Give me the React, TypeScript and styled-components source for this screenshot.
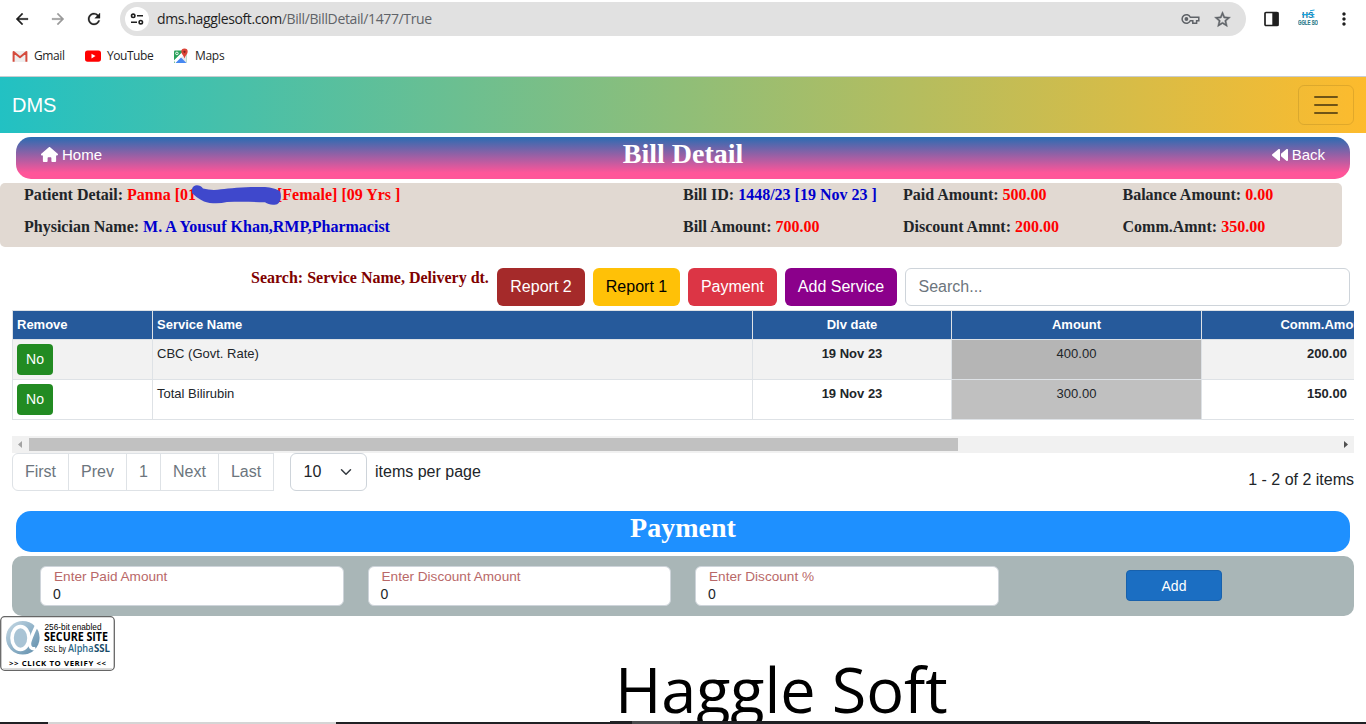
import React from "react";
import styled, { createGlobalStyle } from "styled-components";
import { MdArrowBack, MdArrowForward, MdRefresh, MdStarBorder, MdMoreVert } from "react-icons/md";
import { FaBackward, FaHouse } from "react-icons/fa6";

const sans = `"Liberation Sans", Arial, sans-serif`;
const serif = `"Liberation Serif", "Times New Roman", serif`;
const ui = `"Open Sans", "Segoe UI", sans-serif`;

const GlobalStyle = createGlobalStyle`
  *, *::before, *::after { box-sizing: border-box; }
  body { margin: 0; background: #fff; font-family: ${sans}; color: #212529; overflow: hidden; }
  button, input { font-family: inherit; margin: 0; }
`;

const Page = styled.div`
  width: 1366px;
  height: 724px;
  display: flex;
  flex-direction: column;
  position: relative;
  overflow: hidden;
  white-space: nowrap;
`;

/* Browser chrome */
const Toolbar = styled.div`
  height: 38px;
  display: flex;
  align-items: center;
  flex: none;
  padding-left: 13px;
  color: #1f1f1f;
`;
const NavIcon = styled.span<{ $dim?: boolean }>`
  width: 36px;
  height: 18px;
  display: flex;
  flex: none;
  color: ${(p) => (p.$dim ? "#9a9a9a" : "#1f1f1f")};
  path:not([fill="none"]) { stroke: currentColor; stroke-width: 0.4px; }
`;
const Omnibox = styled.div`
  width: 1126px;
  height: 34px;
  border-radius: 17px;
  background: #e1e1e1;
  display: flex;
  align-items: center;
  padding: 0 14px 0 5px;
  margin-left: -1px;
  flex: none;
  color: #5f6368;
`;
const SiteInfo = styled.span`
  width: 24px;
  height: 24px;
  border-radius: 50%;
  background: #fff;
  display: grid;
  place-items: center;
  margin-right: 8px;
`;
const Url = styled.span`
  flex: 1;
  font: 14px/20px ${ui};
  letter-spacing: -0.37px;
  & > b { font-weight: 400; color: #1f1f1f; }
`;
const BoxIcon = styled.span`
  display: flex;
  margin-left: 13px;
  path:not([fill="none"]) { stroke: currentColor; stroke-width: 0.6px; }
`;
const ToolIcon = styled.span<{ $gap: number }>`
  display: flex;
  margin-left: ${(p) => p.$gap}px;
`;
const Bookmarks = styled.div`
  height: 39px;
  flex: none;
  display: flex;
  align-items: center;
  padding: 0 12px 3px;
  border-bottom: 1px solid #c9cdd0;
  font: 12px/16px ${ui};
  color: #1f1f1f;
`;
const Bookmark = styled.span<{ $width: number; $spacing?: number }>`
  width: ${(p) => p.$width}px;
  display: flex;
  align-items: center;
  gap: 6px;
  letter-spacing: ${(p) => p.$spacing ?? 0}px;
`;

/* Site header */
const Navbar = styled.nav`
  height: 56px;
  flex: none;
  padding: 0 12px;
  display: flex;
  align-items: center;
  justify-content: space-between;
  background: linear-gradient(90deg, #22c1c3 0%, #fdbb2d 100%);
  color: #fff;
  font-size: 20px;
`;
const Toggler = styled.button`
  width: 56px;
  height: 40px;
  padding: 4px 12px;
  border: 1px solid rgba(0, 0, 0, 0.1);
  border-radius: 6px;
  background: transparent;
`;
const TitleBar = styled.header<{ $plain?: boolean }>`
  height: ${(p) => (p.$plain ? 41 : 42)}px;
  flex: none;
  margin: ${(p) => (p.$plain ? "20px 16px 4px" : "4px 16px")};
  padding: 0 25px;
  border-radius: 15px;
  background: ${(p) => (p.$plain ? "#1e90ff" : "linear-gradient(180deg, #2a6cb2 0%, #ff5599 85%)")};
  color: #fff;
  display: grid;
  grid-template-columns: 1fr auto 1fr;
`;
const Heading = styled.h1`
  margin: 0;
  grid-column: 2;
  font: bold 28px/34px ${serif};
`;
const TitleLink = styled.a<{ $end?: boolean }>`
  display: flex;
  height: 35px;
  align-items: center;
  gap: 4px;
  font-size: 15px;
  line-height: 17px;
  justify-self: ${(p) => (p.$end ? "end" : "start")};
`;

/* Bill summary */
const Summary = styled.section`
  position: relative;
  width: 1342px;
  height: 64px;
  flex: none;
  border-radius: 5px;
  background: #e1d9d2;
  padding: 0 0 0 24px;
  display: grid;
  grid-template-columns: 659px 220px 219.5px 1fr;
  grid-template-rows: 32px 32px;
  font: bold 16px/24px ${serif};
`;
const Value = styled.span<{ $blue?: boolean }>`
  color: ${(p) => (p.$blue ? "#0000cd" : "#ff0000")};
`;
const Redacted = styled.span`
  display: inline-block;
  width: 81px;
`;
const Scribble = styled.svg`
  position: absolute;
  left: 190px;
  top: 1px;
`;

/* Actions */
const Actions = styled.div`
  display: flex;
  gap: 8px;
  margin: 21px 16px 4px 251px;
  height: 38px;
  flex: none;
`;
const SearchLabel = styled.span`
  width: 238px;
  font: bold 16px/20px ${serif};
  color: #800000;
`;
const ActionButton = styled.button<{ $bg: string; $width: number; $dark?: boolean }>`
  width: ${(p) => p.$width}px;
  border: 0;
  padding: 0;
  border-radius: 6px;
  background: ${(p) => p.$bg};
  color: ${(p) => (p.$dark ? "#000" : "#fff")};
  font-size: 16px;
`;
const SearchInput = styled.input`
  flex: 1;
  min-width: 0;
  border: 1px solid #ced4da;
  border-radius: 6px;
  padding: 0 12.5px;
  font-size: 16px;
  &::placeholder { color: #6c757d; opacity: 1; }
`;

/* Table */
const TableFrame = styled.div`
  margin: 0 12px;
  height: 126px;
  flex: none;
  overflow: hidden;
`;
const Row = styled.div<{ $kind: "head" | "odd" | "even" }>`
  width: 1440px;
  height: ${(p) => (p.$kind === "head" ? 30 : 40)}px;
  display: grid;
  grid-template-columns: 140px 600px 199px 250px 251px;
  border-bottom: 1px solid #dee2e6;
  border-top: ${(p) => (p.$kind === "head" ? "1px solid #dee2e6" : "0")};
  background: ${(p) => ({ head: "#265a9b", odd: "#f2f2f2", even: "#fff" })[p.$kind]};
  color: ${(p) => (p.$kind === "head" ? "#fff" : "#212529")};
  font-weight: ${(p) => (p.$kind === "head" ? 700 : 400)};
  font-size: 13px;
`;
const Cell = styled.div<{ $center?: boolean; $bold?: boolean; $bg?: string }>`
  border-left: 1px solid #dee2e6;
  padding: 4px;
  line-height: 19.5px;
  text-align: ${(p) => (p.$center ? "center" : "left")};
  font-weight: ${(p) => (p.$bold ? 700 : "inherit")};
  background: ${(p) => p.$bg ?? "transparent"};
`;
const NoButton = styled.button`
  display: block;
  width: 36px;
  height: 31px;
  border: 0;
  padding: 0 0 2px;
  border-radius: 4px;
  background: #228b22;
  color: #fff;
  font-size: 14px;
`;
const ScrollTrack = styled.div`
  height: 17px;
  flex: none;
  margin: 0 12px;
  background: #f1f1f1;
  display: flex;
  align-items: center;
  justify-content: space-between;
`;
const Thumb = styled.span`
  width: 929px;
  height: 13px;
  background: #c1c1c1;
  margin-right: auto;
`;
const ScrollArrow = styled.svg`
  width: 17px;
  height: 17px;
  flex: none;
`;

/* Pagination */
const Pager = styled.div`
  height: 38px;
  flex: none;
  margin: 0 12px;
  display: flex;
  align-items: center;
  font-size: 16px;
`;
const PageLink = styled.a<{ $width: number }>`
  width: ${(p) => p.$width}px;
  height: 38px;
  border: 1px solid #dee2e6;
  margin-right: -1px;
  display: grid;
  place-items: center;
  color: #6c757d;
  &:first-child { border-radius: 6px 0 0 6px; }
`;
const SizeSelect = styled.div`
  width: 77px;
  height: 38px;
  margin: 0 8px 0 17px;
  padding: 0 14px 0 12.5px;
  border: 1px solid #ced4da;
  border-radius: 6px;
  display: flex;
  align-items: center;
  justify-content: space-between;
`;
const ItemCount = styled.span`
  margin-left: auto;
  padding-top: 16px;
`;

/* Payment form */
const PayForm = styled.section`
  height: 60px;
  flex: none;
  margin: 0 12px;
  padding: 0 28px;
  border-radius: 10px;
  background: #a9b6b7;
  display: flex;
  align-items: center;
  gap: 24px;
`;
const Field = styled.label`
  width: 303.5px;
  height: 40px;
  border: 1px solid #ced4da;
  border-radius: 6px;
  background: #fff;
  padding: 1px 12px;
  display: flex;
  flex-direction: column;
  font-size: 14px;
  line-height: 17px;
`;
const FieldLabel = styled.span`
  padding-left: 1px;
  font-size: 13.6px;
  line-height: 18px;
  color: #b96868;
`;
const AddButton = styled.button`
  width: 96px;
  height: 31px;
  margin: 0 0 1px 103.5px;
  padding: 0;
  border: 1px solid #1861ac;
  border-radius: 4px;
  background: #1b6ec2;
  color: #fff;
  font-size: 14px;
`;

/* Footer */
const Footer = styled.footer`
  height: 108px;
  flex: none;
  display: flex;
  align-items: flex-start;
  overflow: hidden;
`;
const Brand = styled.span`
  margin: 29px 0 0 500px;
  font: 63px/88px "Open Sans", sans-serif;
  letter-spacing: -0.1px;
  color: #000;
`;
const Taskbar = styled.div`
  position: absolute;
  left: 0;
  right: 0;
  bottom: 0;
  display: flex;
  align-items: flex-end;
`;
const TaskSegment = styled.span<{ $width: number; $color: string; $tall?: boolean }>`
  width: ${(p) => p.$width}px;
  height: ${(p) => (p.$tall ? 3 : 2)}px;
  background: ${(p) => p.$color};
`;

const rows = [
  { name: "CBC (Govt. Rate)", amount: "400.00", comm: "200.00" },
  { name: "Total Bilirubin", amount: "300.00", comm: "150.00" },
];

function TuneIcon() {
  return (
    <svg width="14" height="12" viewBox="0 0 14 12" fill="none" stroke="#1f1f1f" strokeWidth="1.6">
      <circle cx="3.2" cy="2.8" r="1.7" />
      <path d="M7 2.8h6M1 9.2h6" />
      <circle cx="10.8" cy="9.2" r="1.7" />
    </svg>
  );
}

function KeyIcon() {
  return (
    <svg width="19" height="12" viewBox="0 0 19 12" fill="none" stroke="#5f6368" strokeWidth="1.5">
      <path d="M9.3 4.2A4.3 4.3 0 1 0 9.3 7.8H11.8V10.2H15.6V7.8H17.8V4.2z" />
      <circle cx="5.4" cy="6" r="1.9" fill="#5f6368" stroke="none" />
    </svg>
  );
}

function GmailIcon() {
  return (
    <svg width="16" height="16" viewBox="0 0 16 16">
      <rect x="1" y="3" width="14" height="11" rx="1" fill="#eee" />
      <path d="M1.6 13.8V4l6.4 5.2L14.4 4v9.8" fill="none" stroke="#d54b3d" strokeWidth="2" strokeLinejoin="round" />
    </svg>
  );
}

function YouTubeIcon() {
  return (
    <svg width="16" height="16" viewBox="0 0 16 16">
      <rect x="0" y="2.5" width="16" height="11.2" rx="2.6" fill="#f00" />
      <path d="M6.5 5.8v4.6l4-2.3z" fill="#fff" />
    </svg>
  );
}

function MapsIcon() {
  return (
    <svg width="16" height="16" viewBox="0 0 16 16">
      <rect x="1" y="2.5" width="12.5" height="12.5" rx="1" fill="#2aa15b" />
      <path d="M1 12.5 11 2.5l2.5 1V15H3z" fill="#e8eaed" />
      <path d="M1 12.5 9.5 4l2.2 2L3 15H2z" fill="#fff" />
      <path d="M2.5 15 8 9.6l5.5 5.4z" fill="#4688f1" />
      <circle cx="3.9" cy="5.4" r="1.3" fill="none" stroke="#fff" strokeWidth=".9" />
      <path d="M11.5 10.5c-.4-2.7-3.2-4-3.2-6.7a3.2 3.2 0 0 1 6.4 0c0 2.7-2.8 4-3.2 6.7z" fill="#db4437" />
      <circle cx="11.5" cy="3.8" r="1.1" fill="#7b231e" />
    </svg>
  );
}

function PanelIcon() {
  return (
    <svg width="15" height="16" viewBox="0 0 15 16">
      <rect x="1" y="1.5" width="13" height="13" rx="1" fill="none" stroke="#1f1f1f" strokeWidth="1.7" />
      <path d="M8.3 1h6v14h-6z" fill="#1f1f1f" />
    </svg>
  );
}

function ProfileIcon() {
  return (
    <svg width="20" height="20" viewBox="0 0 20 20">
      <text x="4" y="8.5" fontFamily="Liberation Sans, sans-serif" fontWeight="700" fontSize="8.5" fill="#0d79ad" textLength="11.5" lengthAdjust="spacingAndGlyphs">HS</text>
      <path d="M12 1.8 16.5 1M4 5.5h12.5M14.5 8h2" stroke="#19a7e0" strokeWidth="1" />
      <text x="0" y="16" fontFamily="Liberation Sans, sans-serif" fontWeight="700" fontSize="6.5" fill="#2b7889" stroke="#2b7889" strokeWidth=".2" textLength="20" lengthAdjust="spacingAndGlyphs">GGLE SO</text>
    </svg>
  );
}

function SslBadge() {
  return (
    <svg width="115" height="55" viewBox="0 0 115 55">
      <defs>
        <linearGradient id="orb" x1="0" y1="0" x2="1" y2="1">
          <stop offset="0" stopColor="#c9dbe6" />
          <stop offset=".5" stopColor="#90b2c8" />
          <stop offset="1" stopColor="#5e8caa" />
        </linearGradient>
      </defs>
      <rect x=".7" y=".7" width="113.6" height="53.6" rx="4" fill="#fff" stroke="#666" strokeWidth="1.3" />
      <path d="M3 52.8h109" stroke="#ccc" />
      <circle cx="22.8" cy="21.8" r="16.8" fill="url(#orb)" />
      <ellipse cx="20.5" cy="22" rx="8.5" ry="11.5" fill="#a9c4d5" stroke="#fff" strokeWidth="3.6" />
      <path d="M37 8.5C34 15 30.5 22 29.5 27c-.3 4 2 6.5 6 5.500" fill="none" stroke="#fff" strokeWidth="3.4" />
      <g fontFamily="Open Sans, sans-serif" fill="#000">
        <text x="44.5" y="13.5" fontFamily="Liberation Sans, sans-serif" fontSize="8.3" textLength="57" lengthAdjust="spacingAndGlyphs">256-bit enabled</text>
        <text x="44" y="25.3" fontSize="11.5" fontWeight="700" textLength="64" lengthAdjust="spacingAndGlyphs">SECURE SITE</text>
        <text x="44" y="36" fontFamily="Liberation Sans, sans-serif" fontSize="8.3" textLength="22" lengthAdjust="spacingAndGlyphs">SSL by</text>
        <text x="68" y="36" fontSize="10.5" fontWeight="600" fill="#2d6a8a" textLength="25.5" lengthAdjust="spacingAndGlyphs">Alpha</text>
        <text x="94" y="36" fontSize="10.5" fontWeight="700" fill="#174a68" textLength="16" lengthAdjust="spacingAndGlyphs">SSL</text>
        <text x="9" y="50" fontSize="7.8" fontWeight="700" textLength="97" lengthAdjust="spacing">&gt;&gt; CLICK TO VERIFY &lt;&lt;</text>
      </g>
    </svg>
  );
}

export default function App() {
  return (
    <Page>
      <GlobalStyle />
      <Toolbar>
        <NavIcon><MdArrowBack size={18} /></NavIcon>
        <NavIcon $dim><MdArrowForward size={18} /></NavIcon>
        <NavIcon><MdRefresh size={18} /></NavIcon>
        <Omnibox>
          <SiteInfo><TuneIcon /></SiteInfo>
          <Url><b>dms.hagglesoft.com</b>/Bill/BillDetail/1477/True</Url>
          <KeyIcon />
          <BoxIcon><MdStarBorder size={19} /></BoxIcon>
        </Omnibox>
        <ToolIcon $gap={18}><PanelIcon /></ToolIcon>
        <ToolIcon $gap={19}><ProfileIcon /></ToolIcon>
        <ToolIcon $gap={16}><MdMoreVert size={20} /></ToolIcon>
      </Toolbar>
      <Bookmarks>
        <Bookmark $width={73} $spacing={-0.4}><GmailIcon />Gmail</Bookmark>
        <Bookmark $width={88} $spacing={-0.45}><YouTubeIcon />YouTube</Bookmark>
        <Bookmark $width={60} $spacing={-0.3}><MapsIcon />Maps</Bookmark>
      </Bookmarks>

      <Navbar>
        DMS
        <Toggler aria-label="Toggle navigation">
          <svg width="30" height="30" viewBox="0 0 30 30" stroke="rgba(0,0,0,.55)" strokeWidth="2" strokeLinecap="round">
            <path d="M4 7h22M4 15h22M4 23h22" />
          </svg>
        </Toggler>
      </Navbar>

      <TitleBar>
        <TitleLink><FaHouse size={17} />Home</TitleLink>
        <Heading>Bill Detail</Heading>
        <TitleLink $end><FaBackward size={16} />Back</TitleLink>
      </TitleBar>

      <Summary>
        <div>Patient Detail: <Value>Panna [01<Redacted />[Female] [09 Yrs ]</Value></div>
        <div>Bill ID: <Value $blue>1448/23 [19 Nov 23 ]</Value></div>
        <div>Paid Amount: <Value>500.00</Value></div>
        <div>Balance Amount: <Value>0.00</Value></div>
        <div>Physician Name: <Value $blue>M. A Yousuf Khan,RMP,Pharmacist</Value></div>
        <div>Bill Amount: <Value>700.00</Value></div>
        <div>Discount Amnt: <Value>200.00</Value></div>
        <div>Comm.Amnt: <Value>350.00</Value></div>
        <Scribble width="92" height="22" viewBox="0 0 92 22">
          <path d="M2 5C3 0 10 0 13 4.5c6 1.5 12 1.8 18 .8 10-1.3 28-2.8 44-2.300 6 .5 12 2 15 4.500 2 5 .5 12-4 13-4 .8-8 0-11-2.200-12-.5-25-1-38-.2-8 1.800-17 1.500-23-.7C8 15 4 11 2 9z" fill="#3f48cc" />
        </Scribble>
      </Summary>

      <Actions>
        <SearchLabel>Search: Service Name, Delivery dt.</SearchLabel>
        <ActionButton $bg="#a52a2a" $width={88}>Report 2</ActionButton>
        <ActionButton $bg="#ffc107" $width={87} $dark>Report 1</ActionButton>
        <ActionButton $bg="#dc3545" $width={89}>Payment</ActionButton>
        <ActionButton $bg="#8b008b" $width={112}>Add Service</ActionButton>
        <SearchInput placeholder="Search..." />
      </Actions>

      <TableFrame>
        <Row $kind="head">
          <Cell>Remove</Cell>
          <Cell>Service Name</Cell>
          <Cell $center>Dlv date</Cell>
          <Cell $center>Amount</Cell>
          <Cell $center>Comm.Amount</Cell>
        </Row>
        {rows.map((row, i) => (
          <Row key={row.name} $kind={i % 2 ? "even" : "odd"}>
            <Cell><NoButton>No</NoButton></Cell>
            <Cell>{row.name}</Cell>
            <Cell $center $bold>19 Nov 23</Cell>
            <Cell $center $bg={i % 2 ? "#c0c0c0" : "#b5b5b5"}>{row.amount}</Cell>
            <Cell $center $bold>{row.comm}</Cell>
          </Row>
        ))}
      </TableFrame>
      <ScrollTrack>
        <ScrollArrow viewBox="0 0 17 17"><path d="M10 5v7L6 8.5z" fill="#a3a3a3" /></ScrollArrow>
        <Thumb />
        <ScrollArrow viewBox="0 0 17 17"><path d="M7 5v7l4-3.5z" fill="#505050" /></ScrollArrow>
      </ScrollTrack>

      <Pager>
        <PageLink $width={57}>First</PageLink>
        <PageLink $width={59}>Prev</PageLink>
        <PageLink $width={35}>1</PageLink>
        <PageLink $width={59}>Next</PageLink>
        <PageLink $width={56}>Last</PageLink>
        <SizeSelect>
          10
          <svg width="12" height="12" viewBox="0 0 16 16" fill="none" stroke="#343a40" strokeWidth="2" strokeLinecap="round" strokeLinejoin="round">
            <path d="m2 5 6 6 6-6" />
          </svg>
        </SizeSelect>
        items per page
        <ItemCount>1 - 2 of 2 items</ItemCount>
      </Pager>

      <TitleBar $plain>
        <Heading>Payment</Heading>
      </TitleBar>
      <PayForm>
        <Field><FieldLabel>Enter Paid Amount</FieldLabel>0</Field>
        <Field><FieldLabel>Enter Discount Amount</FieldLabel>0</Field>
        <Field><FieldLabel>Enter Discount %</FieldLabel>0</Field>
        <AddButton>Add</AddButton>
      </PayForm>

      <Footer>
        <SslBadge />
        <Brand>Haggle Soft</Brand>
      </Footer>
      <Taskbar>
        <TaskSegment $width={48} $color="#202124" />
        <TaskSegment $width={288} $color="#d5d5d5" />
        <TaskSegment $width={274} $color="#202124" />
        <TaskSegment $width={22} $color="#202124" $tall />
        <TaskSegment $width={48} $color="#4a4b4d" $tall />
        <TaskSegment $width={470} $color="#202124" $tall />
        <TaskSegment $width={216} $color="#202124" />
      </Taskbar>
    </Page>
  );
}
